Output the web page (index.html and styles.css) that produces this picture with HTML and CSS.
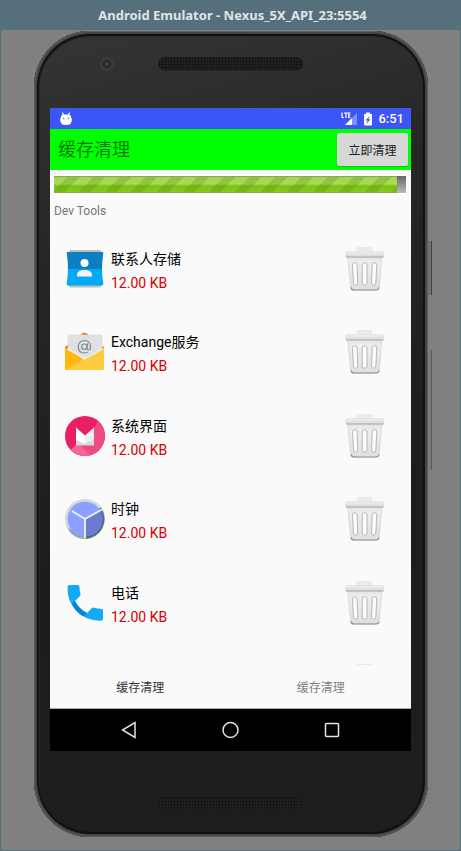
FILE: index.html
```
<!DOCTYPE html>
<html lang="zh-CN">
<head>
<meta charset="utf-8">
<meta name="viewport" content="width=device-width, initial-scale=1">
<title>Android Emulator - Nexus_5X_API_23:5554</title>
<link rel="stylesheet" href="styles.css">
</head>
<body>
<svg class="defs" width="0" height="0" aria-hidden="true">
  <defs>
    <linearGradient id="canFill" x1="0" y1="0" x2="0" y2="1">
      <stop offset="0" stop-color="#e2e2e2"/><stop offset=".2" stop-color="#ededed"/><stop offset="1" stop-color="#dfdfdf"/>
    </linearGradient>
    <linearGradient id="lidFill" x1="0" y1="0" x2="0" y2="1">
      <stop offset="0" stop-color="#f0f0f0"/><stop offset="1" stop-color="#d8d8d8"/>
    </linearGradient>
    <pattern id="mesh" width="3" height="3" patternUnits="userSpaceOnUse">
      <rect width="3" height="3" fill="#222"/>
      <circle cx="1.500" cy="1.500" r="1" fill="#0e0e0e"/>
    </pattern>
    <symbol id="trash" viewBox="0 0 40 44">
      <path d="M12 5V1.500q0-1 1-1h13q1 0 1 1V5z" fill="#ebebeb" stroke="#e2e2e2" stroke-width=".6"/>
      <path d="M2.500 9h34.500l-2.700 31q-.4 3-3.300 3H9q-3 0-3.400-3z" fill="url(#canFill)" stroke="#d2d2d2" stroke-width=".7"/>
      <path d="M6 40.500q.6 2.500 3 2.500h22q2.500 0 3-2.500" fill="none" stroke="#8c8c8c" stroke-width="1.200"/>
      <rect x=".5" y="4.500" width="38.500" height="5.500" rx="1.500" fill="url(#lidFill)" stroke="#dadada" stroke-width=".5"/>
      <path d="M1 10h37.500" stroke="#a8a8a8" stroke-width="1"/>
      <g fill="#fdfdfd" stroke="#b0b0b0" stroke-width=".9">
        <path d="M7.500 18q0-2.300 2.300-2.300t2.300 2.300l.6 18q0 2.200-2 2.200t-2.200-2.200z"/>
        <rect x="17.300" y="15.700" width="4.700" height="22.500" rx="2.300"/>
        <path d="M31.800 18q0-2.300-2.300-2.300t-2.300 2.300l-.6 18q0 2.200 2 2.200t2.200-2.200z"/>
      </g>
    </symbol>
  </defs>
</svg>

<header class="titlebar"><h1>Android Emulator - Nexus_5X_API_23:5554</h1></header>

<main class="stage">
  <div class="phone">
    <span class="side-key power"></span>
    <span class="side-key volume"></span>
    <div class="forehead">
      <span class="camera"></span>
      <svg class="speaker" width="145" height="14" aria-hidden="true"><rect x=".5" y=".5" width="144" height="12.500" rx="6" fill="url(#mesh)" stroke="#1c1c1c"/></svg>
    </div>

    <section class="screen">
      <div class="status">
        <svg width="12" height="14" viewBox="0 0 12 14" aria-label="Android">
          <path d="M2.500 .5l1 3M9.500 .5l-1 3" stroke="#fff" stroke-width="1.100"/>
          <path d="M1 5q0-2.500 2-2.500h6q2 0 2 2.500v5.500q0 2.500-5 2.500t-5-2.500z" fill="#fff"/>
          <path d="M.5 6v4M11.500 6v4" stroke="#c8d0ff"/>
          <circle cx="3.700" cy="6.500" r=".7" fill="#3c55f7"/><circle cx="8.300" cy="6.500" r=".7" fill="#3c55f7"/>
        </svg>
        <div class="status-right">
          <svg width="17" height="14" viewBox="0 0 17 14" aria-label="LTE">
            <path d="M16 1v12H4z" fill="#8093fa"/><path d="M11 6v7H4z" fill="#fff"/>
            <path d="M1 .5v5h2M3.500 1h3M5 1v5M9.500 1H7.700v4.500h1.800M7.700 3.200h1.500" fill="none" stroke="#3c55f7" stroke-width="2.500"/>
            <path d="M1 .5v5h2M3 1h4M5 1v5M9.500 1H7.700v4.500h1.800M7.700 3.200h1.500" fill="none" stroke="#fff" stroke-width="1.200"/>
          </svg>
          <svg width="10" height="14" viewBox="0 0 10 14" aria-label="充电中">
            <path d="M3 .5h4V2h1.500q.5 0 .5.500v10q0 1-1 1H2q-1 0-1-1v-10Q1 2 1.500 2H3z" fill="#fff"/>
            <path d="M6.500 4L2.500 8.500h2.200L3.500 12l4-4.700H5.300z" fill="#3c55f7"/>
          </svg>
          <time>6:51</time>
        </div>
      </div>

      <div class="appbar">
        <h2>缓存清理</h2>
        <button class="clean" type="button">立即清理</button>
      </div>

      <div class="scan">
        <progress id="scan" class="bar" max="352" value="343" aria-label="Dev Tools"></progress>
        <label for="scan">Dev Tools</label>
      </div>

      <ul class="apps">
        <li>
          <svg class="icon" viewBox="0 0 40 40" aria-hidden="true">
            <path d="M4 2.500L5 1h30l1.500 2v33.500L35 38.500H5L3 36z" fill="#bdbdbd"/>
            <path d="M3 3h34q1.500 0 1.300 1.500Q37 13 37 20H3Q3 13 1.800 4.500 1.500 3 3 3z" fill="#0b7fc0"/>
            <path d="M3 20h34q0 7 1.300 14.500.2 2-1.500 2H3.200q-1.700 0-1.500-2Q3 27 3 20z" fill="#03a9f4"/>
            <circle cx="19.500" cy="14" r="4" fill="#fff"/><path d="M12 27.500V25q1-4 7.500-4t7.500 4v2.500z" fill="#f5f5f5"/>
          </svg>
          <div class="info"><strong>联系人存储</strong><span>12.00 KB</span></div>
          <button class="del" type="button" aria-label="清理"><svg><use href="#trash"/></svg></button>
        </li>
        <li>
          <svg class="icon" viewBox="0 0 40 40" aria-hidden="true">
            <path d="M0 15L16.500 2q3-2.500 6 0L39 15l-3 6H3z" fill="#ef6c00"/>
            <path d="M2.500 5q0-2.500 2-2.500h31q2 0 2 2.500v20h-35z" fill="#e0e0e0"/>
            <path d="M0 16l20 13 19-13v20q0 2-2 2H2q-2 0-2-2z" fill="#fbc02d"/>
            <path d="M39 16L1 37.500q.5.500 1.500.5H37q2 0 2-2z" fill="#fdcb3e"/>
            <path d="M2.500 17.700L18.500 27 .8 37.500Q0 37 0 36V16z" fill="#ffb908"/>
            <path d="M2.500 17.700v-2L20 26.200l17.500-10.500v2L20 27.500z" fill="#eee"/>
            <g fill="none" stroke="#78909c" stroke-width="1.200"><circle cx="19.300" cy="14.700" r="2.700"/><path d="M22.500 11.500l-.5 5q.3 2 2 1.300 2-1 1.500-4-1-5.300-6-5.300-6 .2-6.300 6.300.2 6 6 6.200 2 0 3.500-.7"/></g>
          </svg>
          <div class="info"><strong>Exchange服务</strong><span>12.00 KB</span></div>
          <button class="del" type="button" aria-label="清理"><svg><use href="#trash"/></svg></button>
        </li>
        <li>
          <svg class="icon" viewBox="0 0 40 40" aria-hidden="true">
            <circle cx="20" cy="20" r="20" fill="#e91e63"/>
            <path d="M29 12l4-7.200A20 20 0 0 1 34 34a20 20 0 0 1-28.500-.2L11 29z" fill="#f04a86"/>
            <path d="M16 29.500l9 9.800q-10 2.500-19.500-5.500L11 29z" fill="#f36f9f" opacity=".7"/>
            <path d="M11 11.500l9 8v9.500h-9z" fill="#fff"/>
            <path d="M29 11.500l-9 8v9.500h9z" fill="#efefef"/>
            <path d="M11 24l9 4 9-4v5.500H11z" fill="#d9d9d9"/>
          </svg>
          <div class="info"><strong>系统界面</strong><span>12.00 KB</span></div>
          <button class="del" type="button" aria-label="清理"><svg><use href="#trash"/></svg></button>
        </li>
        <li>
          <svg class="icon" viewBox="0 0 40 40" aria-hidden="true">
            <circle cx="20" cy="20" r="20" fill="#cfd8dc"/>
            <path d="M35.500 8A20 20 0 0 1 20 40v-3z" fill="#546e7a"/><path d="M2.500 29A20 20 0 0 0 20 40v-4z" fill="#90a4ae"/>
            <circle cx="20" cy="20" r="17.300" fill="#8c9eff"/>
            <path d="M20 20l15.300-8.500A17.300 17.300 0 0 1 20 37.300z" fill="#6b7bd2"/>
            <path d="M7 12l13 8 17-9.500M20 19v20.500" fill="none" stroke="#f2f3fa" stroke-width="1.800"/>
          </svg>
          <div class="info"><strong>时钟</strong><span>12.00 KB</span></div>
          <button class="del" type="button" aria-label="清理"><svg><use href="#trash"/></svg></button>
        </li>
        <li>
          <svg class="icon" viewBox="0 0 40 40" aria-hidden="true">
            <path d="M2.500 4q0-2 2-2h8q2 0 2 2 0 4 1 7 .3 1.200-.7 2.200L10 18Q13.500 25.500 22 30l4.700-4.700q1-1 2.300-.6 3.500 1 7 1 2 0 2 2v8q0 2-2 2Q20.500 38 11 27.500 2 17.500 2.500 4z" fill="#12a9f5"/>
            <path d="M10 18Q13.500 25.500 22 30L18.500 33.500Q10.500 29 7 21z" fill="#0288d1"/>
          </svg>
          <div class="info"><strong>电话</strong><span>12.00 KB</span></div>
          <button class="del" type="button" aria-label="清理"><svg><use href="#trash"/></svg></button>
        </li>
        <li>
          <button class="del" type="button" aria-label="清理"><svg><use href="#trash"/></svg></button>
        </li>
      </ul>

      <div class="tabs">
        <button class="tab active" type="button">缓存清理</button>
        <button class="tab" type="button">缓存清理</button>
      </div>

      <nav class="nav">
        <button type="button" aria-label="返回"><svg width="18" height="18" viewBox="0 0 18 18"><path d="M14 1.500v15L1.500 9z"/></svg></button>
        <button type="button" aria-label="主页"><svg width="18" height="18" viewBox="0 0 18 18"><circle cx="8.500" cy="9" r="7.500"/></svg></button>
        <button type="button" aria-label="概览"><svg width="18" height="18" viewBox="0 0 18 18"><rect x="2.500" y="2.500" width="13" height="13" rx="1"/></svg></button>
      </nav>
    </section>

    <div class="chin">
      <svg class="speaker" width="145" height="14" aria-hidden="true"><rect x=".5" y=".5" width="144" height="12.500" rx="6" fill="url(#mesh)" stroke="#191919"/></svg>
    </div>
  </div>
</main>
</body>
</html>
```
FILE: styles.css
```
* { box-sizing: border-box; }

body {
  margin: 0;
  min-height: 100vh;
  display: flex;
  flex-direction: column;
  background: #566f7c;
  font-family: Roboto, "Noto Sans CJK SC", sans-serif;
}

h1, h2, ul { margin: 0; padding: 0; }

button {
  margin: 0;
  padding: 0;
  border: 0;
  background: none;
  font: inherit;
}

svg { display: block; }

.defs { position: absolute; }

.titlebar {
  height: 30px;
  display: flex;
  align-items: center;
  justify-content: center;
  color: #dfe5e8;
}

.titlebar h1 {
  padding-left: 4px;
  font: bold 13px/18px "Noto Sans", sans-serif;
}

.stage {
  flex: 1;
  margin: 0 1px 1px;
  padding: 1px 32px 13px 33px;
  background: #808080;
}

.phone {
  position: relative;
  padding: 0 17px 0 16px;
  border-radius: 56px;
  background: linear-gradient(165deg, #353536, #262626 25%, #1d1d1e 60%, #1e1e1f);
  box-shadow:
    inset 0 0 1px 1px #626262,
    inset 0 0 0 3px #454344,
    inset 0 0 1px 5px #101010,
    inset 1px 1px 0 5px #2e2e2e;
}

.side-key {
  position: absolute;
  left: 100%;
  width: 4px;
  background: #716e70;
  border-right: 1px solid #444243;
}

.power { top: 210px; height: 54px; }

.volume {
  top: 319px;
  height: 120px;
  background: #7c7b7c;
  border-color: #5a5859;
}

.forehead {
  height: 77px;
  position: relative;
  display: flex;
  justify-content: center;
  padding-top: 26px;
}

.camera {
  position: absolute;
  left: 50px;
  top: 26px;
  width: 14px;
  height: 14px;
  border-radius: 50%;
  background: radial-gradient(circle, #4a3f4c 0 1px, #23222a 3px, #29292c 4px, #3a3a3a 5px);
}

.chin {
  height: 86px;
  display: flex;
  justify-content: center;
  padding-top: 46px;
}

.screen { background: #fafafa; }

.status {
  height: 21px;
  padding: 0 7px 0 10px;
  display: flex;
  align-items: center;
  justify-content: space-between;
  background: #3c55f7;
  color: #fff;
}

.status-right {
  display: flex;
  align-items: center;
  gap: 5px;
  font-weight: 500;
  font-size: 13px;
  line-height: 20px;
}

.appbar {
  height: 41px;
  padding: 0 3px 0 8px;
  display: flex;
  align-items: center;
  justify-content: space-between;
  background: #0f0;
}

.appbar h2 {
  font-weight: 400;
  font-size: 18px;
  line-height: 24px;
  color: rgba(0, 0, 0, .54);
}

.clean {
  width: 71px;
  height: 33px;
  border-radius: 2px;
  background: #d6d7d7;
  box-shadow: 0 1px 1px rgba(0, 0, 0, .2);
  color: #212121;
  font-size: 12px;
}

.scan {
  height: 58px;
  padding: 6px 5px 0 4px;
  display: flex;
  flex-direction: column;
  gap: 10px;
}

.scan label {
  color: #757575;
  font-size: 12px;
  line-height: 16px;
}

.bar {
  appearance: none;
  display: block;
  width: 100%;
  height: 17px;
  border: 0;
}

.bar::-webkit-progress-bar {
  background: linear-gradient(#666, #bbb);
}

.bar::-webkit-progress-value {
  border: 1px solid #8aa956;
  border-width: 1px 0;
  background:
    linear-gradient(135deg, transparent 25%, rgba(80, 130, 10, .24) 27% 48%, transparent 50% 75%, rgba(80, 130, 10, .24) 77% 98%, transparent) 0 0 / 26px 26px,
    linear-gradient(#a3d555, #a8dc55 45%, #7cc211 60%, #86c926);
}

.apps {
  height: 437px;
  overflow: hidden;
  list-style: none;
  display: grid;
  grid-template-rows: 83px 84px 83px 84px 83px 83px;
}

.apps li {
  padding: 0 26px 2px 15px;
  display: flex;
  align-items: center;
  gap: 6px;
}

.icon {
  width: 40px;
  height: 40px;
}

.info {
  padding-top: 4px;
  display: flex;
  flex-direction: column;
  font-size: 14px;
  line-height: 24px;
}

.info strong {
  font-weight: 400;
  color: #000;
}

.info span { color: #d50000; }

.del { margin-left: auto; }

.del svg {
  width: 40px;
  height: 44px;
}

.tabs {
  height: 44px;
  display: grid;
  grid-template-columns: 1fr 1fr;
  border-bottom: 1px solid #aaa;
}

.tab {
  color: #808080;
  font-size: 12px;
}

.tab.active { color: #333; }

.nav {
  height: 42px;
  padding: 0 29px;
  display: grid;
  grid-template-columns: repeat(3, 1fr);
  background: #000;
}

.nav button {
  display: flex;
  align-items: center;
  justify-content: center;
}

.nav svg {
  fill: none;
  stroke: #e4e4e4;
  stroke-width: 1.500;
}
```
